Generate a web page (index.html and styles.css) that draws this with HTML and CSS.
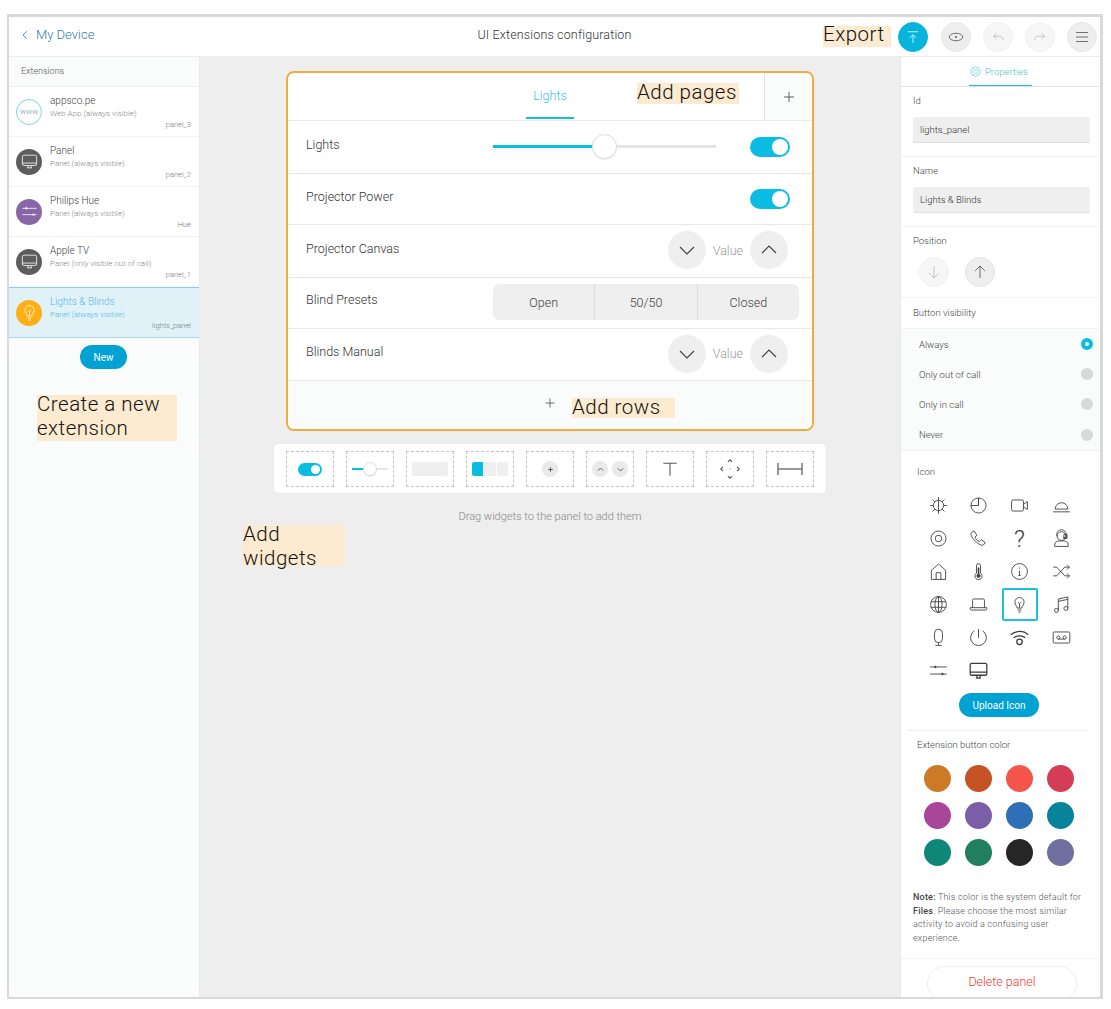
FILE: index.html
```html
<!DOCTYPE html>
<html lang="en">

<head>
  <meta charset="UTF-8">
  <meta name="viewport" content="width=device-width, initial-scale=1.0">
  <title>UI Extensions configuration</title>
  <link rel="stylesheet" href="styles.css">
</head>

<body>
  <svg class="icon-defs" width="0" height="0">
    <symbol id="i-monitor" viewBox="0 0 24 24"><rect x="3" y="4" width="18" height="13" rx="2"/><path d="M3 14h18M9 20h6M10 17v3M14 17v3"/></symbol>
    <symbol id="i-sliders" viewBox="0 0 24 24"><path d="M3 8h18M3 16h18"/><circle cx="8" cy="8" r="1" fill="currentColor"/><circle cx="17" cy="16" r="1"/></symbol>
    <symbol id="i-bulb" viewBox="0 0 24 24"><path d="M9 16.500c0-2.500-2.800-4-2.800-7.500a5.800 5.800 0 0 1 11.600 0c0 3.500-2.800 5-2.800 7.500zM9.500 19h5M10.500 21.500h3M12 16V11l-2-2M12 11l2-2"/></symbol>
    <symbol id="i-down" viewBox="0 0 24 24"><path d="M5 9l7 7 7-7"/></symbol>
    <symbol id="i-up" viewBox="0 0 24 24"><path d="M5 15l7-7 7 7"/></symbol>
    <symbol id="i-plus" viewBox="0 0 24 24"><path d="M12 6v12M6 12h12"/></symbol>
  </svg>

  <div class="frame">
    <header class="topbar">
      <a class="back-link">
        <svg class="back-chevron" viewBox="0 0 8 12"><path d="M6.500 1L1.500 6l5 5"/></svg>
        My Device
      </a>
      <div class="topbar-title">UI Extensions configuration</div>
      <div class="topbar-actions">
        <span class="callout callout-export"><span class="callout-text">Export</span></span>
        <button class="round-btn round-primary">
          <svg viewBox="0 0 24 24"><path d="M5 5h14M12 20V9M7.500 13.500L12 9l4.500 4.500"/></svg>
        </button>
        <button class="round-btn">
          <svg viewBox="0 0 24 24"><ellipse cx="12" cy="12" rx="9" ry="5"/><circle cx="12" cy="12" r="1"/></svg>
        </button>
        <button class="round-btn round-disabled">
          <svg viewBox="0 0 24 24"><path d="M19 16c0-3-2-5-4.500-5H6M10 7l-4 4 4 4"/></svg>
        </button>
        <button class="round-btn round-disabled">
          <svg viewBox="0 0 24 24"><path d="M5 16c0-3 2-5 4.500-5H18M14 7l4 4-4 4"/></svg>
        </button>
        <button class="round-btn">
          <svg viewBox="0 0 24 24"><path d="M4 6h16M4 12h16M4 18h16"/></svg>
        </button>
      </div>
    </header>

    <div class="workspace">
      <aside class="sidebar">
        <div class="sidebar-title">Extensions</div>
        <div class="ext-item">
          <div class="ext-avatar ext-www">www</div>
          <div class="ext-body">
            <div class="ext-name">appsco.pe</div>
            <div class="ext-sub">Web App (always visible)</div>
            <div class="ext-id">panel_3</div>
          </div>
        </div>
        <div class="ext-item">
          <div class="ext-avatar ext-grey"><svg><use href="#i-monitor"/></svg></div>
          <div class="ext-body">
            <div class="ext-name">Panel</div>
            <div class="ext-sub">Panel (always visible)</div>
            <div class="ext-id">panel_2</div>
          </div>
        </div>
        <div class="ext-item">
          <div class="ext-avatar ext-purple"><svg><use href="#i-sliders"/></svg></div>
          <div class="ext-body">
            <div class="ext-name">Philips Hue</div>
            <div class="ext-sub">Panel (always visible)</div>
            <div class="ext-id">Hue</div>
          </div>
        </div>
        <div class="ext-item">
          <div class="ext-avatar ext-grey"><svg><use href="#i-monitor"/></svg></div>
          <div class="ext-body">
            <div class="ext-name">Apple TV</div>
            <div class="ext-sub">Panel (only visible out of call)</div>
            <div class="ext-id">panel_1</div>
          </div>
        </div>
        <div class="ext-item ext-selected">
          <div class="ext-avatar ext-yellow"><svg><use href="#i-bulb"/></svg></div>
          <div class="ext-body">
            <div class="ext-name">Lights &amp; Blinds</div>
            <div class="ext-sub">Panel (always visible)</div>
            <div class="ext-id">lights_panel</div>
          </div>
        </div>
        <button class="pill-btn new-btn">New</button>
        <div class="callout callout-create"><span class="callout-text">Create a new extension</span></div>
      </aside>

      <main class="canvas">
        <section class="panel-card">
          <div class="panel-tabs">
            <div class="panel-tab-area"><span class="panel-tab">Lights</span></div>
            <div class="panel-tab-add"><svg><use href="#i-plus"/></svg></div>
            <span class="callout callout-pages"><span class="callout-text">Add pages</span></span>
          </div>

          <div class="panel-row row-lights">
            <span class="row-label">Lights</span>
            <div class="slider"><div class="slider-fill"></div><div class="slider-thumb"></div></div>
            <div class="toggle"></div>
          </div>
          <div class="panel-row row-power">
            <span class="row-label">Projector Power</span>
            <div class="toggle"></div>
          </div>
          <div class="panel-row row-canvas">
            <span class="row-label">Projector Canvas</span>
            <div class="stepper">
              <div class="step-btn"><svg><use href="#i-down"/></svg></div>
              <span class="step-value">Value</span>
              <div class="step-btn"><svg><use href="#i-up"/></svg></div>
            </div>
          </div>
          <div class="panel-row row-presets">
            <span class="row-label">Blind Presets</span>
            <div class="segments">
              <div class="segment">Open</div>
              <div class="segment">50/50</div>
              <div class="segment">Closed</div>
            </div>
          </div>
          <div class="panel-row row-manual">
            <span class="row-label">Blinds Manual</span>
            <div class="stepper">
              <div class="step-btn"><svg><use href="#i-down"/></svg></div>
              <span class="step-value">Value</span>
              <div class="step-btn"><svg><use href="#i-up"/></svg></div>
            </div>
          </div>
          <div class="panel-add-row">
            <svg><use href="#i-plus"/></svg>
            <span class="callout callout-rows"><span class="callout-text">Add rows</span></span>
          </div>
        </section>

        <div class="widget-bar">
          <div class="widget-cell"><div class="toggle toggle-mini"></div></div>
          <div class="widget-cell">
            <div class="slider slider-mini"><div class="slider-fill"></div><div class="slider-thumb"></div></div>
          </div>
          <div class="widget-cell"><div class="mini-button"></div></div>
          <div class="widget-cell">
            <div class="mini-segments"><span class="mini-seg-on"></span><span></span><span></span></div>
          </div>
          <div class="widget-cell"><div class="mini-round"><svg><use href="#i-plus"/></svg></div></div>
          <div class="widget-cell mini-pair">
            <div class="mini-round"><svg><use href="#i-up"/></svg></div>
            <div class="mini-round"><svg><use href="#i-down"/></svg></div>
          </div>
          <div class="widget-cell">
            <svg class="mini-glyph" viewBox="0 0 24 24"><path d="M4 5h16M12 5v15"/></svg>
          </div>
          <div class="widget-cell">
            <svg class="mini-glyph" viewBox="0 0 24 24"><path d="M9.500 3.500L12 1l2.500 2.500M9.500 20.500L12 23l2.500-2.500M3.500 9.500L1 12l2.500 2.500M20.500 9.500L23 12l-2.500 2.500M11.500 12h1"/></svg>
          </div>
          <div class="widget-cell">
            <svg class="mini-spacer" viewBox="0 0 26 14"><path d="M1 1v12M25 1v12M1 7h24"/></svg>
          </div>
        </div>
        <div class="widget-hint">Drag widgets to the panel to add them</div>
        <div class="callout callout-widgets"><span class="callout-text">Add widgets</span></div>
      </main>

      <aside class="props">
        <div class="props-tabs">
          <div class="props-tab">
            <svg viewBox="0 0 24 24"><path d="M12 2.500l2 2.500 3.200-.6.800 3.100 3 1.500-1.200 3 1.200 3-3 1.500-.8 3.100-3.200-.6-2 2.500-2-2.500-3.200.6-.8-3.100-3-1.500 1.200-3-1.200-3 3-1.500.8-3.100 3.200.6z"/><circle cx="12" cy="12" r="4"/></svg>
            Properties
          </div>
        </div>

        <div class="props-section">
          <div class="props-label">Id</div>
          <div class="props-input">lights_panel</div>
        </div>
        <div class="props-section">
          <div class="props-label">Name</div>
          <div class="props-input">Lights &amp; Blinds</div>
        </div>
        <div class="props-section section-position">
          <div class="props-label">Position</div>
          <div class="position-btns">
            <button class="round-btn round-disabled"><svg viewBox="0 0 24 24"><path d="M12 4v16M5.500 13.500L12 20l6.500-6.500"/></svg></button>
            <button class="round-btn"><svg viewBox="0 0 24 24"><path d="M12 20V4M5.500 10.500L12 4l6.500 6.500"/></svg></button>
          </div>
        </div>
        <div class="props-heading">Button visibility</div>
        <div class="radio-list">
          <div class="radio-row">Always<span class="radio radio-on"></span></div>
          <div class="radio-row">Only out of call<span class="radio"></span></div>
          <div class="radio-row">Only in call<span class="radio"></span></div>
          <div class="radio-row">Never<span class="radio"></span></div>
        </div>

        <div class="icon-section">
          <div class="inset-label">Icon</div>
          <div class="icon-grid">
            <div class="icon-cell"><svg viewBox="0 0 24 24"><circle cx="12" cy="12" r="6.500"/><path d="M12 1.500v4M12 18.500v4M1.500 12h4M18.500 12h4M4.500 4.500l3 3M16.500 16.500l3 3M19.500 4.500l-3 3M7.500 16.500l-3 3M12 5.500v13"/></svg></div>
            <div class="icon-cell"><svg viewBox="0 0 24 24"><path d="M12 2.500a9.500 9.500 0 1 1-9.500 9.500H12zM12 2.500V12"/><path d="M12 2.500A9.500 9.500 0 0 0 2.500 12"/></svg></div>
            <div class="icon-cell"><svg viewBox="0 0 24 24"><rect x="2" y="5" width="15" height="14" rx="2"/><path d="M17 10.500l5-3.500v10l-5-3.500"/></svg></div>
            <div class="icon-cell"><svg viewBox="0 0 24 24"><path d="M4 16.500a8 8 0 0 1 16 0zM1.500 20h21"/></svg></div>
            <div class="icon-cell"><svg viewBox="0 0 24 24"><circle cx="12" cy="12" r="9.500"/><rect x="8" y="8" width="8" height="8" rx="3.500"/></svg></div>
            <div class="icon-cell"><svg viewBox="0 0 24 24"><path d="M3 4.500L6.500 2.500l3.500 5.500-2.500 2.200c1 2.600 3 4.700 5.800 5.800l2.200-2.500 5 3.500-2 3c-1 1-3 .5-5-.5C8 16.500 3.500 11 2.500 7c-.2-1 0-2 .5-2.500z"/></svg></div>
            <div class="icon-cell icon-question">?</div>
            <div class="icon-cell"><svg viewBox="0 0 24 24"><circle cx="12" cy="9" r="5.500"/><path d="M6 9V7a6 6 0 0 1 12 0v4h-4M3.500 22v-3c0-2.500 3-3.500 5.500-4h6c2.500.5 5.500 1.500 5.500 4v3zM15 7h4v5h-4z"/></svg></div>
            <div class="icon-cell"><svg viewBox="0 0 24 24"><path d="M3 22V10.500L12 2.500l9 8V22zM9 22v-8.500h6V22"/></svg></div>
            <div class="icon-cell"><svg viewBox="0 0 24 24"><path d="M9.500 14V4.500a2.500 2.500 0 0 1 5 0V14a4.500 4.500 0 1 1-5 0z"/><path d="M12 7v9" stroke-width="2"/><circle cx="12" cy="17.500" r="2" fill="currentColor"/></svg></div>
            <div class="icon-cell"><svg viewBox="0 0 24 24"><circle cx="12" cy="12" r="10"/><path d="M12 11v6M10.500 17h3M12 7v1.500"/></svg></div>
            <div class="icon-cell"><svg viewBox="0 0 24 24"><path d="M1.500 6.500H6l10 11h6M1.500 17.500H6l10-11h6M19 3.500l3 3-3 3M19 14.500l3 3-3 3"/></svg></div>
            <div class="icon-cell"><svg viewBox="0 0 24 24"><circle cx="12" cy="12" r="10"/><ellipse cx="12" cy="12" rx="4.500" ry="10"/><path d="M12 2v20M2.500 8.500h19M2.500 15.500h19"/></svg></div>
            <div class="icon-cell"><svg viewBox="0 0 24 24"><path d="M4.500 16V6.500a1.500 1.500 0 0 1 1.500-1.500h12a1.500 1.500 0 0 1 1.500 1.500V16M1.500 16h21v1.500a1.500 1.500 0 0 1-1.500 1.500H3a1.500 1.500 0 0 1-1.500-1.500z"/></svg></div>
            <div class="icon-cell icon-selected"><svg viewBox="0 0 24 24"><use href="#i-bulb"/></svg></div>
            <div class="icon-cell"><svg viewBox="0 0 24 24"><path d="M8 19.500V5l12-2.500V17M8 8l12-2.500"/><circle cx="5.500" cy="19.500" r="2.500"/><circle cx="17.500" cy="17" r="2.500"/></svg></div>
            <div class="icon-cell"><svg viewBox="0 0 24 24"><rect x="7" y="1.500" width="10" height="17" rx="5"/><path d="M12 18.500v3M8 22h8"/></svg></div>
            <div class="icon-cell"><svg viewBox="0 0 24 24"><path d="M12 1.500v11M7 3.500a10 10 0 1 0 10 0"/></svg></div>
            <div class="icon-cell"><svg viewBox="0 0 24 24"><path d="M1 8.500C7 3 17 3 23 8.500M4.500 12.500c4-3.500 11-3.500 15 0" stroke-width="1.600"/><circle cx="12" cy="17.500" r="3.500" stroke-width="1.600"/></svg></div>
            <div class="icon-cell"><svg viewBox="0 0 24 24"><rect x="1.500" y="5" width="21" height="14" rx="1.500"/><circle cx="8" cy="12" r="2"/><circle cx="16" cy="12" r="2"/><path d="M8 14h8"/></svg></div>
            <div class="icon-cell"><svg viewBox="0 0 24 24"><path d="M1.500 7.500h21M1.500 16.500h21"/><circle cx="8" cy="7.500" r="1" fill="currentColor"/><circle cx="17" cy="16.500" r="1" fill="currentColor"/></svg></div>
            <div class="icon-cell"><svg viewBox="0 0 24 24"><rect x="1.500" y="3" width="21" height="15" rx="2" stroke-width="1.600"/><path d="M1.500 14h21M9 21.500h6M10 18v3.500M14 18v3.500" stroke-width="1.600"/></svg></div>
          </div>
          <button class="pill-btn upload-btn">Upload Icon</button>
        </div>

        <div class="color-section">
          <div class="inset-label">Extension button color</div>
          <div class="color-grid">
            <span class="swatch c-amber"></span>
            <span class="swatch c-rust"></span>
            <span class="swatch c-coral"></span>
            <span class="swatch c-rose"></span>
            <span class="swatch c-magenta"></span>
            <span class="swatch c-purple"></span>
            <span class="swatch c-blue"></span>
            <span class="swatch c-teal"></span>
            <span class="swatch c-sea"></span>
            <span class="swatch c-green"></span>
            <span class="swatch c-black"></span>
            <span class="swatch c-slate"></span>
          </div>
          <p class="color-note"><b>Note:</b> This color is the system default for <b>Files</b>. Please choose the most similar activity to avoid a confusing user experience.</p>
        </div>

        <div class="delete-section">
          <button class="delete-btn">Delete panel</button>
        </div>
      </aside>
    </div>
  </div>
</body>

</html>
```

FILE: styles.css
```css
* {
  box-sizing: border-box;
}

body {
  margin: 0;
  padding: 14px 0 0 7px;
  background-color: #ffffff;
  font-family: Roboto, "Open Sans", sans-serif;
  font-weight: 300;
  color: #444444;
}

button {
  font-family: inherit;
  font-weight: inherit;
  cursor: pointer;
}

svg {
  fill: none;
  stroke: currentColor;
  stroke-width: 1;
}

.icon-defs {
  position: absolute;
}

.frame {
  width: 1096px;
  height: 985px;
  border-style: solid;
  border-color: #d9d9d9;
  border-width: 3px 3px 2px 2px;
  display: flex;
  flex-direction: column;
  overflow: hidden;
}

/* annotations laid over the screenshot */
.callout {
  background-color: #fcebd0;
  color: #111111;
  font-size: 20.500px;
  line-height: 24px;
  letter-spacing: 0.5px;
}

.callout-text {
  position: relative;
  top: -3px;
}

/* top bar */
.topbar {
  height: 40px;
  flex: none;
  display: flex;
  align-items: center;
  position: relative;
  border-bottom: 1px solid #ececec;
  background-color: #ffffff;
}

.back-link {
  display: flex;
  align-items: center;
  gap: 8px;
  margin: 0 0 5px 13px;
  font-size: 13px;
  color: #2f7aab;
}

.back-chevron {
  width: 6px;
  height: 10px;
  stroke-width: 1.200;
  margin-top: 2px;
}

.topbar-title {
  position: absolute;
  left: 0;
  right: 0;
  padding-bottom: 5px;
  text-align: center;
  font-size: 12.500px;
  letter-spacing: 0.15px;
  color: #333333;
}

.topbar-actions {
  margin-left: auto;
  margin-right: 3px;
  display: flex;
  align-items: center;
  gap: 12px;
  position: relative;
}

.callout-export {
  width: 68px;
  margin-right: -5px;
  height: 21px;
  line-height: 22px;
}

.round-btn {
  width: 30px;
  height: 30px;
  flex: none;
  padding: 5px;
  border: 1px solid #e6e6e6;
  border-radius: 50%;
  background-color: #eeeeee;
  color: #444444;
  display: flex;
}

.round-btn svg {
  width: 18px;
  height: 18px;
}

.round-primary {
  margin-right: 1px;
  background-color: #05b5dc;
  border-color: #05b5dc;
  color: #ffffff;
}

.round-disabled {
  background-color: #f6f6f6;
  border-color: #f2f2f2;
  color: #b5b5b5;
}

.workspace {
  flex: 1;
  display: flex;
  min-height: 0;
}

/* left list */
.sidebar {
  width: 191px;
  flex: none;
  background-color: #fafbfb;
  border-right: 1px solid #ebebeb;
  display: flex;
  flex-direction: column;
}

.sidebar-title {
  height: 30px;
  flex: none;
  padding-left: 12px;
  line-height: 29px;
  font-size: 9px;
  color: #555555;
  border-bottom: 1px solid #eeeeee;
}

.ext-item {
  height: 50px;
  flex: none;
  display: flex;
  align-items: center;
  gap: 8px;
  padding: 0 8px 0 7px;
  background-color: #ffffff;
  border-bottom: 1px solid #f3f3f3;
}

.ext-avatar {
  width: 26px;
  height: 26px;
  flex: none;
  border-radius: 50%;
  color: #ffffff;
  display: flex;
  align-items: center;
  justify-content: center;
}

.ext-avatar svg {
  width: 19px;
  height: 19px;
}

.ext-www {
  background-color: #ffffff;
  border: 1px solid #7fd0e8;
  color: #6f93ad;
  font-size: 8px;
}

.ext-grey {
  background-color: #5d5d5d;
}

.ext-purple {
  background-color: #8a65a8;
}

.ext-yellow {
  background-color: #fdb015;
}

.ext-body {
  flex: 1;
  min-width: 0;
}

.ext-name {
  font-size: 10px;
  line-height: 12px;
  color: #444444;
}

.ext-sub {
  margin-top: 1px;
  font-size: 8px;
  line-height: 11px;
  color: #888888;
}

.ext-id {
  font-size: 7.500px;
  line-height: 9px;
  margin-top: 1px;
  text-align: right;
  color: #777777;
}

.ext-selected {
  height: 51px;
  background-color: #e0f2f8;
  border-top: 1px solid #8fcfe3;
  border-bottom: 1px solid #a6d8e6;
}

.ext-selected .ext-name,
.ext-selected .ext-sub {
  color: #56b9de;
}

.pill-btn {
  border: none;
  border-radius: 12px;
  height: 24px;
  flex: none;
  background-color: #00a1d3;
  color: #ffffff;
  font-size: 10px;
  font-weight: 400;
}

.new-btn {
  width: 47px;
  align-self: center;
  margin-top: 7px;
  margin-right: 1px;
}

.callout-create {
  width: 140px;
  height: 46px;
  margin: 26px 0 0 28px;
}

/* middle canvas */
.canvas {
  flex: 1;
  min-width: 0;
  position: relative;
  background-color: #eeeeee;
  display: flex;
  flex-direction: column;
  align-items: center;
  padding-top: 14px;
}

.panel-card {
  width: 528px;
  height: 360px;
  flex: none;
  border: 2px solid #f1ab43;
  border-radius: 8px;
  background-color: #ffffff;
  overflow: hidden;
  display: flex;
  flex-direction: column;
}

.panel-tabs {
  height: 48px;
  flex: none;
  display: flex;
  position: relative;
  border-bottom: 1px solid #e8e8e8;
}

.panel-tab-area {
  flex: 1;
  display: flex;
  justify-content: center;
  padding-left: 48px;
}

.panel-tab {
  width: 48px;
  height: 46px;
  text-align: center;
  line-height: 46px;
  font-size: 12.500px;
  color: #3fbfe5;
  border-bottom: 2px solid #1cbce0;
}

.panel-tab-add {
  width: 48px;
  display: flex;
  align-items: center;
  justify-content: center;
  background-color: #fafbfb;
  border-left: 1px solid #e3e3e3;
  color: #444444;
}

.panel-tab-add svg {
  width: 20px;
  height: 20px;
}

.callout-pages {
  position: absolute;
  left: 349px;
  top: 10px;
  width: 102px;
  height: 21px;
  line-height: 25px;
}

.panel-row {
  display: flex;
  align-items: center;
  padding: 0 22px 0 18px;
  border-bottom: 1px solid #e8e8e8;
}

.row-lights {
  height: 53px;
}

.row-power {
  height: 51px;
}

.row-canvas {
  height: 53px;
  padding: 0 24px 2px 18px;
}

.row-presets {
  height: 51px;
  padding: 0 13px 2px 18px;
}

.row-manual {
  height: 52px;
  padding: 0 24px 2px 18px;
}

.row-label {
  flex: 1;
  font-size: 12.500px;
  color: #333333;
  position: relative;
  top: -3px;
}

.row-canvas .row-label,
.row-manual .row-label {
  top: -2px;
}

.toggle {
  width: 40px;
  height: 20px;
  flex: none;
  border-radius: 10px;
  background-color: #0bbde3;
  position: relative;
}

.toggle::after {
  content: "";
  position: absolute;
  right: 2px;
  top: 2px;
  width: 16px;
  height: 16px;
  border-radius: 50%;
  background-color: #ffffff;
}

.slider {
  width: 223px;
  height: 3px;
  margin: 0 34px 2px 0;
  background-color: #e5e5e5;
  position: relative;
}

.slider-fill {
  width: 45%;
  height: 100%;
  background-color: #0bbde3;
}

.slider-thumb {
  position: absolute;
  left: 99px;
  top: -11px;
  width: 25px;
  height: 25px;
  border: 1px solid #dddddd;
  border-radius: 50%;
  background-color: #ffffff;
  box-shadow: 0 1px 1px rgba(0, 0, 0, 0.08);
}

.stepper {
  display: flex;
  align-items: center;
  gap: 7px;
}

.step-btn {
  width: 38px;
  height: 38px;
  border-radius: 50%;
  background-color: #efefef;
  color: #444444;
  display: flex;
  align-items: center;
  justify-content: center;
}

.step-btn svg {
  width: 24px;
  height: 24px;
  stroke-width: 1.200;
}

.step-value {
  font-size: 12.500px;
  color: #999999;
}

.segments {
  width: 306px;
  height: 36px;
  flex: none;
  display: flex;
  border-radius: 6px;
  background-color: #efefef;
}

.segment {
  flex: 1;
  display: flex;
  align-items: center;
  justify-content: center;
  font-size: 12.500px;
  color: #444444;
  border-left: 1px solid #dcdcdc;
}

.segment:first-child {
  border-left: none;
}

.panel-add-row {
  flex: 1;
  position: relative;
  display: flex;
  align-items: center;
  justify-content: center;
  background-color: #fafbfb;
  color: #444444;
}

.panel-add-row svg {
  width: 18px;
  height: 18px;
  margin-bottom: 4px;
}

.callout-rows {
  position: absolute;
  left: 284px;
  top: 17px;
  width: 103px;
  height: 20px;
  line-height: 24px;
}

/* widget strip */
.widget-bar {
  width: 552px;
  height: 49px;
  flex: none;
  margin-top: 13px;
  padding: 7px 12px 6px;
  display: flex;
  gap: 12px;
  border-radius: 4px;
  background-color: #ffffff;
  box-shadow: 0 0 1px rgba(0, 0, 0, 0.15);
}

.widget-cell {
  width: 48px;
  height: 36px;
  border: 1px dashed #c4c4c4;
  display: flex;
  align-items: center;
  justify-content: center;
  color: #555555;
}

.toggle-mini {
  width: 24px;
  height: 13px;
}

.toggle-mini::after {
  width: 9px;
  height: 9px;
}

.slider-mini {
  width: 36px;
  height: 2px;
  margin: 0;
}

.slider-mini .slider-fill {
  width: 35%;
}

.slider-mini .slider-thumb {
  left: 11px;
  top: -6px;
  width: 14px;
  height: 14px;
}

.mini-button {
  width: 36px;
  height: 14px;
  border-radius: 2px;
  background-color: #efefef;
}

.mini-segments {
  width: 36px;
  height: 14px;
  display: flex;
  gap: 1px;
  border-radius: 2px;
  overflow: hidden;
}

.mini-segments span {
  flex: 1;
  background-color: #efefef;
}

.mini-segments .mini-seg-on {
  background-color: #0bbde3;
}

.mini-round {
  width: 16px;
  height: 16px;
  flex: none;
  border-radius: 50%;
  background-color: #e9e9e9;
  display: flex;
  align-items: center;
  justify-content: center;
}

.mini-round svg {
  width: 9px;
  height: 9px;
  stroke-width: 2.500;
}

.mini-pair {
  gap: 4px;
}

.mini-glyph {
  width: 20px;
  height: 20px;
  stroke-width: 1.300;
}

.mini-spacer {
  width: 26px;
  height: 14px;
  stroke-width: 1.500;
  color: #777777;
}

.widget-hint {
  margin-top: 17px;
  font-size: 11px;
  line-height: 14px;
  color: #888888;
}

.callout-widgets {
  position: absolute;
  left: 43px;
  top: 468px;
  width: 102px;
  height: 41px;
}

/* right properties column */
.props {
  width: 200px;
  flex: none;
  background-color: #ffffff;
  border-left: 1px solid #e8e8e8;
  display: flex;
  flex-direction: column;
}

.props-tabs {
  height: 30px;
  flex: none;
  display: flex;
  justify-content: center;
  border-bottom: 1px solid #e4e4e4;
}

.props-tab {
  width: 63px;
  height: 29px;
  display: flex;
  align-items: center;
  gap: 3px;
  font-size: 9.500px;
  white-space: nowrap;
  color: #4fbde0;
  border-bottom: 1px solid #1cbce0;
}

.props-tab svg {
  width: 13px;
  height: 13px;
  flex: none;
}

.props-section {
  height: 70px;
  flex: none;
  padding: 7px 10px 0 12px;
  border-bottom: 1px solid #f1f1f1;
}

.section-position {
  height: 71px;
}

.props-label,
.props-heading,
.inset-label {
  font-size: 9.500px;
  line-height: 14px;
  color: #444444;
}

.props-input {
  height: 26px;
  margin-top: 9px;
  padding-left: 7px;
  line-height: 26px;
  font-size: 9.500px;
  color: #333333;
  background-color: #efefef;
  border-radius: 2px;
  border-bottom: 1px solid #dddddd;
}

.position-btns {
  display: flex;
  gap: 16px;
  margin: 9px 0 0 6px;
}

.props-heading {
  height: 31px;
  flex: none;
  padding-left: 12px;
  line-height: 30px;
  border-bottom: 1px solid #f1f1f1;
}

.radio-list {
  height: 122px;
  flex: none;
  background-color: #fafbfb;
  border-bottom: 1px solid #f1f1f1;
}

.radio-row {
  height: 30.200px;
  display: flex;
  align-items: center;
  justify-content: space-between;
  padding: 0 7px 0 18px;
  font-size: 9.500px;
  color: #444444;
}

.radio {
  width: 12px;
  height: 12px;
  border-radius: 50%;
  background-color: #d9d9d9;
}

.radio-on {
  background-color: #ffffff;
  border: 4px solid #0bbde3;
}

.icon-section {
  height: 279px;
  flex: none;
  padding-top: 14px;
  display: flex;
  flex-direction: column;
}

.inset-label {
  padding-left: 16px;
}

.icon-grid {
  display: grid;
  grid-template-columns: 40px 41px 41px 42px;
  grid-auto-rows: 33px;
  margin: 10px 0 0 17px;
  height: 198px;
}

.icon-cell {
  display: flex;
  align-items: center;
  justify-content: center;
  color: #3c3c3c;
}

.icon-cell svg {
  width: 19px;
  height: 19px;
  stroke-width: 1.100;
}

.icon-question {
  font-size: 24px;
}

.icon-selected {
  width: 36px;
  height: 33px;
  justify-self: center;
  border: 2px solid #1cc0e5;
  border-radius: 2px;
}

.upload-btn {
  width: 80px;
  align-self: center;
  margin-top: 6px;
  margin-right: 3px;
}

.color-section {
  height: 228px;
  flex: none;
  margin: 0 12px 0 7px;
  border-top: 1px solid #eeeeee;
  padding-top: 7px;
}

.color-section .inset-label {
  padding-left: 9px;
}

.color-grid {
  display: grid;
  grid-template-columns: repeat(4, 41px);
  grid-auto-rows: 37px;
  margin: 8px 0 0 9px;
  justify-items: center;
  align-items: center;
}

.swatch {
  width: 27px;
  height: 27px;
  border-radius: 50%;
}

.c-amber { background-color: #cc7a26; }
.c-rust { background-color: #c65323; }
.c-coral { background-color: #f4564c; }
.c-rose { background-color: #d43d55; }
.c-magenta { background-color: #a8479a; }
.c-purple { background-color: #7a5fa8; }
.c-blue { background-color: #2f6fb7; }
.c-teal { background-color: #07839a; }
.c-sea { background-color: #0e8778; }
.c-green { background-color: #1f7f5e; }
.c-black { background-color: #262626; }
.c-slate { background-color: #7070a0; }

.color-note {
  width: 172px;
  margin: 20px 0 0 5px;
  font-size: 9px;
  line-height: 13.700px;
  letter-spacing: 0.2px;
  color: #555555;
}

.color-note b {
  font-weight: 500;
  color: #444444;
}

.delete-section {
  flex: none;
  padding: 7px 0 0 26px;
  border-top: 1px solid #f1f1f1;
}

.delete-btn {
  width: 150px;
  height: 35px;
  padding: 0 0 4px;
  border: 1px solid #eeeeee;
  border-radius: 18px;
  background-color: #ffffff;
  color: #ef3a34;
  font-size: 12.500px;
}
```
